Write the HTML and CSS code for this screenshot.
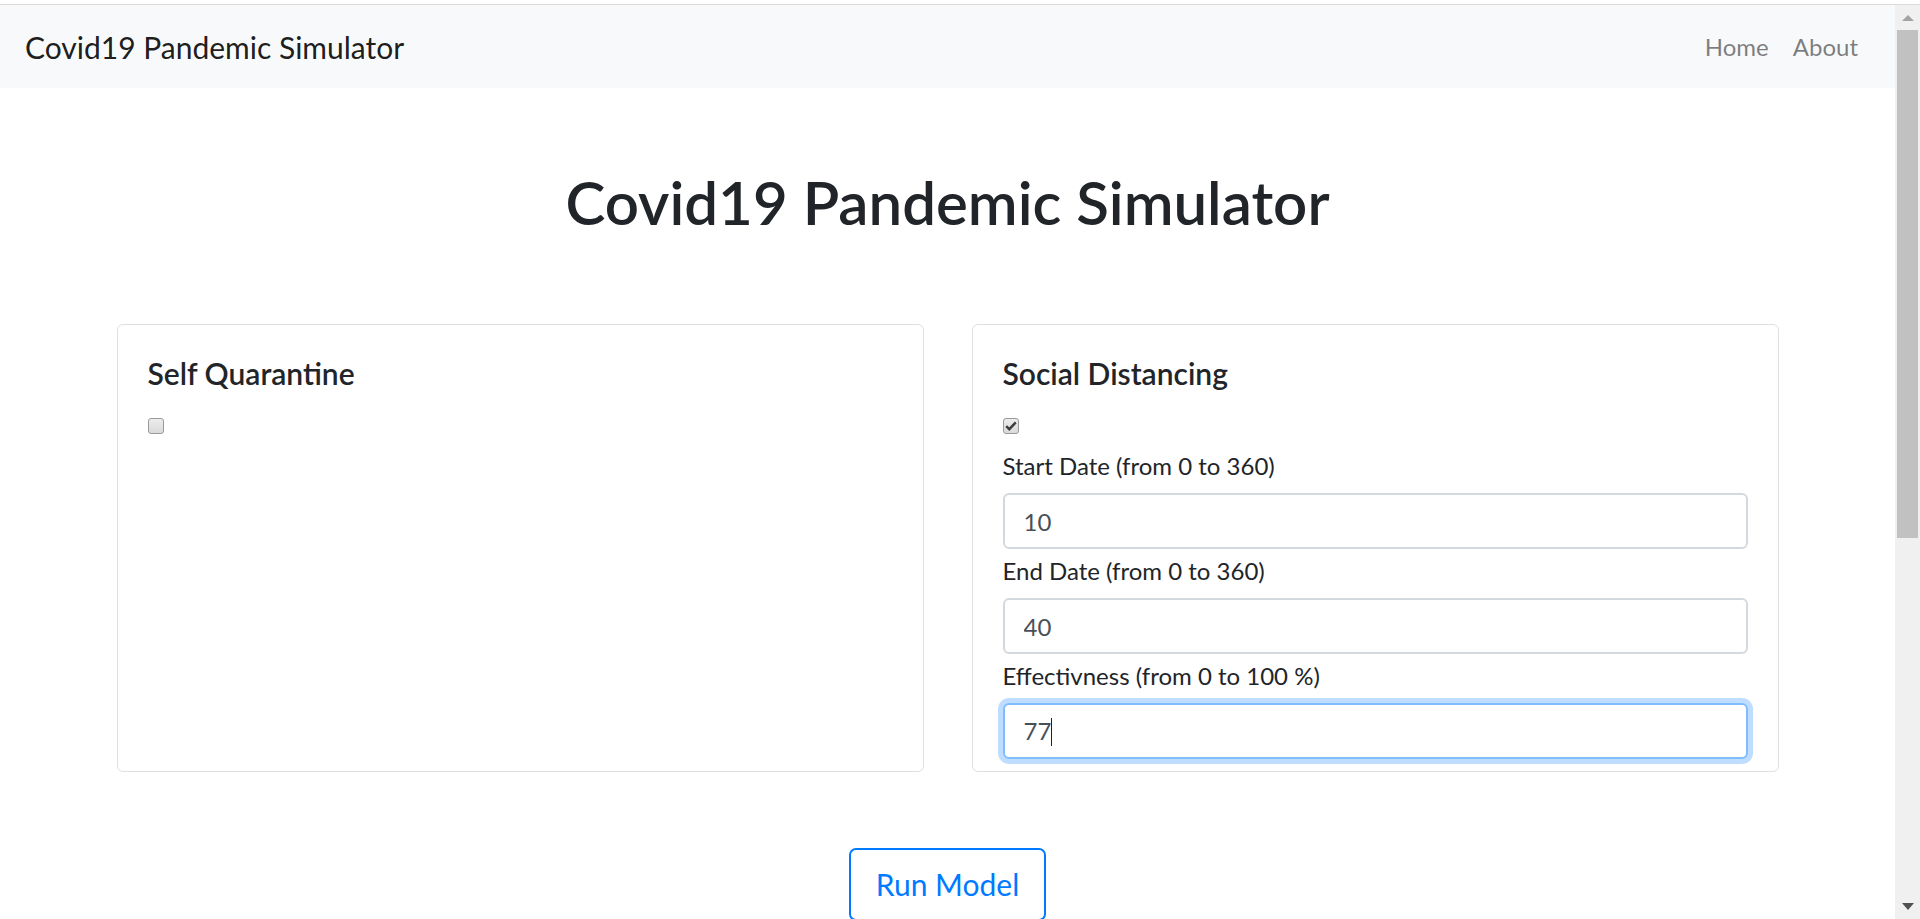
FILE: index.html
```html
<!DOCTYPE html>
<html lang="en">
<head>
  <meta charset="UTF-8">
  <title>Covid19 Pandemic Simulator</title>
  <link rel="stylesheet" href="styles.css">
</head>
<body>
  <div class="topline"></div>
  <div class="viewport">
    <div class="page">
      <nav class="navbar">
        <a class="brand" href="#">Covid19 Pandemic Simulator</a>
        <div class="nav-links">
          <a class="nav-link" href="#">Home</a>
          <a class="nav-link" href="#">About</a>
        </div>
      </nav>

      <main class="container">
        <h1 class="title">Covid19 Pandemic Simulator</h1>

        <div class="row">
          <div class="card">
            <h5 class="card-title">Self Quarantine</h5>
            <span class="checkbox"></span>
          </div>

          <div class="card">
            <h5 class="card-title">Social Distancing</h5>
            <span class="checkbox checked">
              <svg width="12" height="10" viewBox="0 0 12 10"><path d="M1.2 5.2 L4.3 8.2 L10.8 1.4" fill="none" stroke="#3c3c3c" stroke-width="2.4"/></svg>
            </span>
            <div class="form-group first">
              <label for="startDate">Start Date (from 0 to 360)</label>
              <input type="text" id="startDate" class="form-control" value="10">
            </div>
            <div class="form-group">
              <label for="endDate">End Date (from 0 to 360)</label>
              <input type="text" id="endDate" class="form-control" value="40">
            </div>
            <div class="form-group">
              <label for="effect">Effectivness (from 0 to 100 %)</label>
              <div class="form-control focused">77<span class="caret"></span></div>
            </div>
          </div>
        </div>

        <div class="actions">
          <button class="btn-run">Run Model</button>
        </div>
      </main>
    </div>

    <div class="scrollbar">
      <span class="sb-arrow up"></span>
      <span class="sb-thumb"></span>
      <span class="sb-arrow down"></span>
    </div>
  </div>
</body>
</html>
```

FILE: styles.css
```css
html, body { margin: 0; height: 919px; overflow: hidden; }
body { font-family: Lato, "Liberation Sans", sans-serif; color: #212529; background: #fff; }

.topline { height: 4px; border-bottom: 1px solid #dadada; }
.viewport { display: flex; height: 914px; }
.page { flex: 1; overflow: hidden; }

.navbar { height: 83px; background: #f8f9fa; display: flex; align-items: center; justify-content: space-between; padding: 0 25px; }
.brand { font-size: 30px; color: rgba(0,0,0,.9); text-decoration: none; }
.nav-links { display: flex; }
.nav-link { font-size: 24px; color: rgba(0,0,0,.5); text-decoration: none; padding: 0 12px; }

.container { max-width: 1662px; margin: 0 auto; }
.title { font-size: 60px; font-weight: 600; line-height: 72px; text-align: center; margin: 78px 0 0; }

.row { display: flex; gap: 48px; margin-top: 86px; }
.card { flex: 1; display: flex; flex-direction: column; border: 1px solid #dfdfdf; border-radius: 6px; padding: 30px 30px 12px; }
.card-title { font-size: 30px; font-weight: 600; line-height: 36px; margin: 0 0 12px; }

.checkbox { display: flex; align-items: center; justify-content: center; align-self: flex-start; width: 14px; height: 14px; margin-top: 15px; border: 1px solid #9a9a9a; border-radius: 3px; background: linear-gradient(#ececec, #dadada); }

.form-group { margin-top: 4px; }
.form-group.first { margin-top: 14px; }
.form-group label { display: block; font-size: 24px; line-height: 36px; margin-bottom: 9px; }
.form-control { display: block; box-sizing: border-box; width: 100%; height: 56px; padding: 0 19px; font-family: inherit; font-size: 24px; line-height: 52px; color: #495057; border: 2px solid #d4d9de; border-radius: 6px; background: #fff; outline: none; }
.form-control.focused { border-color: #80bdff; box-shadow: 0 0 0 5px rgba(0,123,255,.25); }
.caret { display: inline-block; width: 1px; height: 28px; background: #222; vertical-align: -6px; }

.actions { display: flex; justify-content: center; margin-top: 76px; }
.btn-run { font-family: inherit; font-size: 30px; line-height: 45px; color: #007bff; background: #fff; border: 2px solid #007bff; border-radius: 7px; padding: 12px 25px; cursor: pointer; }

.scrollbar { width: 25px; background: #f0f0f0; display: flex; flex-direction: column; align-items: center; }
.sb-arrow { width: 0; height: 0; border-left: 6px solid transparent; border-right: 6px solid transparent; }
.sb-arrow.up { margin-top: 10px; border-bottom: 6px solid #a3a3a3; }
.sb-arrow.down { margin-top: auto; margin-bottom: 9px; border-top: 7px solid #505050; }
.sb-thumb { width: 21px; height: 508px; margin-top: 9px; background: #c1c1c1; }
```
